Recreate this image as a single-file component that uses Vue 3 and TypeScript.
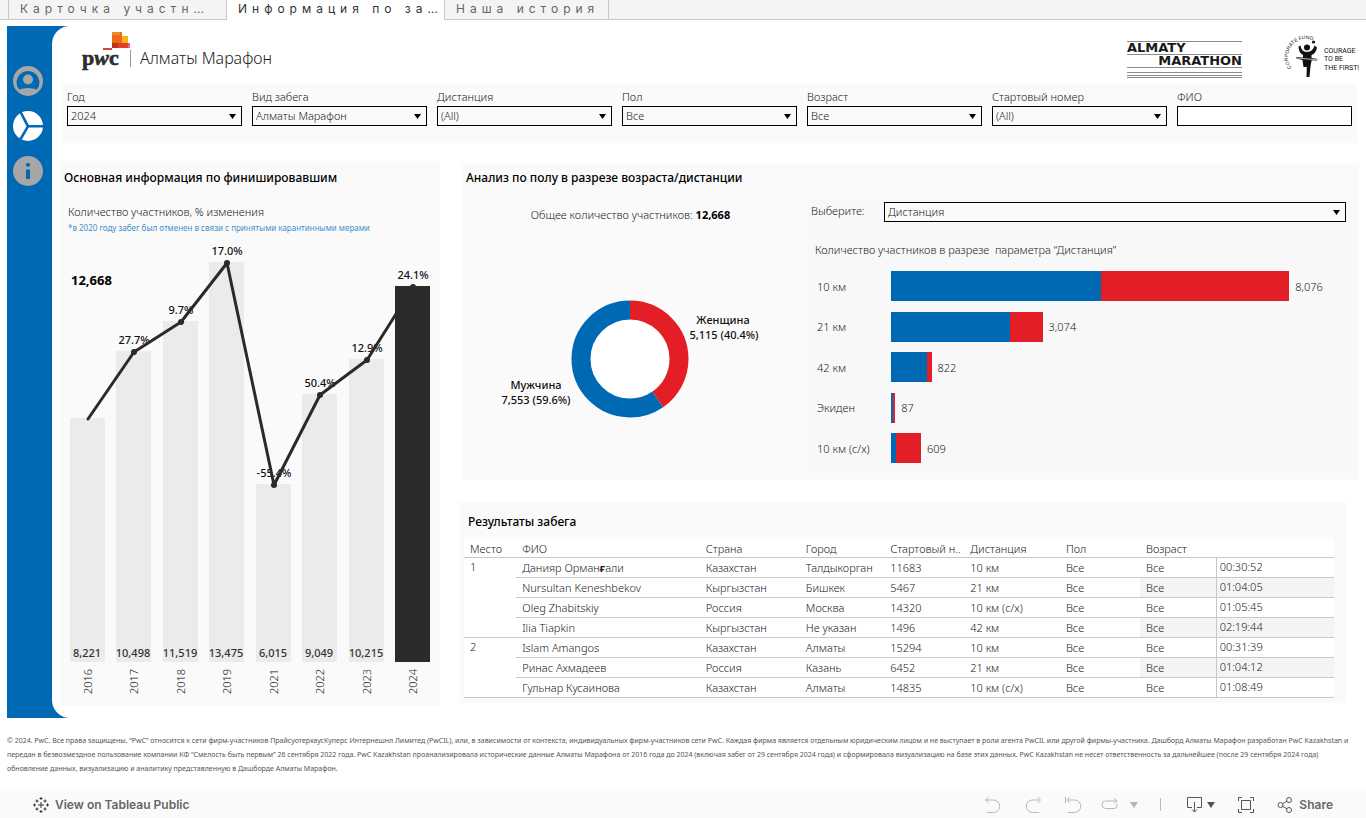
<script setup lang="ts">
import { computed, ref } from 'vue'

interface Filter {
  id: string
  label: string
  options: string[]
}

interface YearStat {
  year: string
  total: number
  change: string
}

interface DistanceStat {
  name: string
  men: number
  total: number
}

interface Runner {
  place?: string
  span?: number
  name: string[]
  country: string
  city: string
  bib: string
  distance: string
  time: string
}

const tabs = ['Карточка участн…', 'Информация по за…', 'Наша история']
const activeTab = ref(1)

const filters: Filter[] = [
  { id: 'year', label: 'Год', options: ['2024'] },
  { id: 'race', label: 'Вид забега', options: ['Алматы Марафон'] },
  { id: 'distance', label: 'Дистанция', options: ['(All)'] },
  { id: 'sex', label: 'Пол', options: ['Все'] },
  { id: 'age', label: 'Возраст', options: ['Все'] },
  { id: 'bib', label: 'Стартовый номер', options: ['(All)'] },
]

const years: YearStat[] = [
  { year: '2016', total: 8221, change: '' },
  { year: '2017', total: 10498, change: '27.7%' },
  { year: '2018', total: 11519, change: '9.7%' },
  { year: '2019', total: 13475, change: '17.0%' },
  { year: '2021', total: 6015, change: '-55.4%' },
  { year: '2022', total: 9049, change: '50.4%' },
  { year: '2023', total: 10215, change: '12.9%' },
  { year: '2024', total: 12668, change: '24.1%' },
]

const baseline = 422
const bars = computed(() =>
  years.map((y, i) => {
    const height = Math.floor((y.total / 13475) * 400)
    const x = Math.round(10 + i * 46.45)
    return { ...y, x, cx: x + 18, height, top: baseline - height, current: i === years.length - 1 }
  }),
)
const linePoints = computed(() => bars.value.map((b) => `${b.cx},${b.top + 1}`).join(' '))

const distances: DistanceStat[] = [
  { name: '10 км', men: 4262, total: 8076 },
  { name: '21 км', men: 2410, total: 3074 },
  { name: '42 км', men: 740, total: 822 },
  { name: 'Экиден', men: 50, total: 87 },
  { name: '10 км (с/х)', men: 95, total: 609 },
]
const axisMax = 9350
const share = (n: number) => `${(n / axisMax) * 100}%`
const format = (n: number) => n.toLocaleString('en-US')

const columns = ['Место', 'ФИО', 'Страна', 'Город', 'Стартовый н..', 'Дистанция', 'Пол', 'Возраст', '']
const runners: Runner[] = [
  { place: '1', span: 4, name: ['Данияр Орман', 'ғ', 'али'], country: 'Казахстан', city: 'Талдыкорган', bib: '11683', distance: '10 км', time: '00:30:52' },
  { name: ['Nursultan Keneshbekov'], country: 'Кыргызстан', city: 'Бишкек', bib: '5467', distance: '21 км', time: '01:04:05' },
  { name: ['Oleg Zhabitskiy'], country: 'Россия', city: 'Москва', bib: '14320', distance: '10 км (с/х)', time: '01:05:45' },
  { name: ['Ilia Tiapkin'], country: 'Кыргызстан', city: 'Не указан', bib: '1496', distance: '42 км', time: '02:19:44' },
  { place: '2', span: 3, name: ['Islam Amangos'], country: 'Казахстан', city: 'Алматы', bib: '15294', distance: '10 км', time: '00:31:39' },
  { name: ['Ринас Ахмадеев'], country: 'Россия', city: 'Казань', bib: '6452', distance: '21 км', time: '01:04:12' },
  { name: ['Гульнар Кусаинова'], country: 'Казахстан', city: 'Алматы', bib: '14835', distance: '10 км (с/х)', time: '01:08:49' },
]
</script>

<template>
  <div class="page">
    <nav class="tabs" aria-label="Листы">
      <button
        v-for="(tab, i) in tabs"
        :key="tab"
        type="button"
        :class="['tab', { active: i === activeTab }]"
        @click="activeTab = i"
      >
        {{ tab }}
      </button>
    </nav>

    <div class="shell">
      <nav class="rail" aria-label="Разделы">
        <button type="button" aria-label="Участник">
          <svg viewBox="0 0 30 30" width="30" height="30">
            <circle cx="15" cy="15" r="15" fill="#a6a6a6" />
            <path d="M6 23.600A11.500 11.500 0 1 1 24 23.600Q15 20.200 6 23.600Z" fill="#0069b4" />
            <circle cx="15" cy="13.500" r="5" fill="#a6a6a6" />
          </svg>
        </button>
        <button type="button" aria-label="Забеги">
          <svg viewBox="0 0 30 30" width="30" height="30">
            <circle cx="15" cy="15" r="15" fill="#fff" />
            <path d="M7.500 1L15 15.300L7 29M15 15.300H30" fill="none" stroke="#0069b4" stroke-width="2.600" />
          </svg>
        </button>
        <button type="button" aria-label="Информация">
          <svg viewBox="0 0 30 30" width="30" height="30">
            <circle cx="15" cy="15" r="15" fill="#a6a6a6" />
            <circle cx="15" cy="8.800" r="2.100" fill="#0069b4" />
            <path d="M13 13.500H17V23H13Z" fill="#0069b4" />
          </svg>
        </button>
      </nav>

      <main class="main">
        <header class="header">
          <svg class="pwc" viewBox="0 0 50 44" width="50" height="44" role="img" aria-label="pwc">
            <rect x="30" y="2" width="10" height="16" fill="#eb6a1c" />
            <rect x="30" y="2" width="8" height="3" fill="#f08a24" />
            <rect x="40" y="6" width="6" height="8" fill="#fbb216" />
            <rect x="30" y="13" width="10" height="5" fill="#c5301f" />
            <rect x="36" y="13" width="10" height="5" fill="#e0402a" />
            <rect x="46" y="13" width="2" height="5" fill="#e8628f" />
            <rect x="21" y="18" width="9" height="2" fill="#cf4a3c" />
            <text x="0" y="35" class="pwc-word">p<tspan font-style="italic">w</tspan>c</text>
          </svg>
          <h1 class="title">Алматы Марафон</h1>
          <svg class="marathon" viewBox="0 0 115 40" width="115" height="40" role="img" aria-label="Almaty Marathon">
            <g fill="#8c8c8c">
              <rect y="2" width="115" height="1" />
              <rect y="15" width="115" height="1" />
              <rect y="28" width="115" height="1" />
              <rect y="33" width="115" height="1" />
              <rect y="36" width="115" height="1" />
              <rect y="38" width="115" height="1" />
            </g>
            <text x="0" y="13" class="marathon-word">ALMATY</text>
            <text x="115" y="26" text-anchor="end" class="marathon-word">MARATHON</text>
          </svg>
          <svg class="fund" viewBox="0 0 76 46" width="76" height="46" role="img" aria-label="Courage to be the first">
            <path id="fund-arc" d="M8.600 34.800A18 18 0 1 1 41 24" fill="none" />
            <text class="fund-arc-word"><textPath href="#fund-arc">CORPORATE FUND</textPath></text>
            <circle cx="24" cy="14.500" r="3" />
            <circle cx="30.500" cy="9" r="1.600" />
            <path d="M15.500 13.500L17.500 12.500Q18 18.500 24 19Q30 18.500 31.500 12.500L34 14.500Q33 20.500 28.500 22L28.500 25L34.500 26L34 27.500L28.700 27.200L27.500 33L26.500 44H23.500L23.800 34H20.500L19.500 27L13 25.500L13.200 24L20 24.500V22Q15.500 19.500 15.500 13.500Z" />
            <path d="M13 25L34.500 26.800" stroke="#fff" stroke-width="0.700" />
            <g class="fund-word">
              <text x="41" y="20">COURAGE</text>
              <text x="41" y="28">TO BE</text>
              <text x="41" y="37">THE FIRST!</text>
            </g>
          </svg>
        </header>

        <form class="filters" @submit.prevent>
          <div v-for="f in filters" :key="f.id" class="field">
            <label :for="f.id">{{ f.label }}</label>
            <div class="select">
              <select :id="f.id">
                <option v-for="o in f.options" :key="o">{{ o }}</option>
              </select>
              <svg class="arrow" viewBox="0 0 7 5" width="7" height="5"><path d="M0 0H7L3.500 5Z" /></svg>
            </div>
          </div>
          <div class="field">
            <label for="fio">ФИО</label>
            <input id="fio" type="text" />
          </div>
        </form>

        <div class="board">
          <section class="panel finishers">
            <h2>Основная информация по финишировавшим</h2>
            <h3>Количество участников, % изменения</h3>
            <p class="hint">*в 2020 году забег был отменен в связи с принятыми карантинными мерами</p>
            <svg class="columns" viewBox="0 0 380 460" role="img" aria-label="Количество участников по годам">
              <rect
                v-for="b in bars.slice(0, -1)"
                :key="b.year"
                :x="b.x"
                :y="b.top"
                width="35"
                :height="b.height"
                fill="#ebebeb"
              />
              <text v-for="b in bars" :key="b.year" :x="b.cx" :y="b.top - 7" class="change">{{ b.change }}</text>
              <polyline :points="linePoints" fill="none" stroke="#2b2a29" stroke-width="3" stroke-linecap="round" stroke-linejoin="round" />
              <circle v-for="b in bars.slice(1)" :key="b.year" :cx="b.cx" :cy="b.top + 1" r="3" fill="#2b2a29" />
              <template v-for="b in bars" :key="b.year">
                <rect v-if="b.current" :x="b.x" :y="b.top" width="35" :height="b.height" fill="#2b2a29" />
                <text v-else :x="b.cx - 1" :y="baseline - 5" class="amount">{{ format(b.total) }}</text>
                <text :transform="`translate(${b.cx + 4} 454) rotate(-90)`" class="year">{{ b.year }}</text>
              </template>
              <text x="11" y="45" class="total">12,668</text>
            </svg>
          </section>

          <div class="side">
            <section class="panel analysis">
              <h2>Анализ по полу в разрезе возраста/дистанции</h2>
              <div class="analysis-body">
                <div class="gender">
                  <p class="sum">Общее количество участников: <b>12,668</b></p>
                  <svg class="donut" viewBox="0 0 345 160" width="345" height="160" role="img" aria-label="Распределение по полу">
                    <circle cx="168" cy="80" r="40" fill="#fff" />
                    <g fill="none" stroke-width="19" transform="rotate(-90 168 80)">
                      <circle cx="168" cy="80" r="49" stroke="#0069b4" pathLength="1000" stroke-dasharray="0 404 596 0" />
                      <circle cx="168" cy="80" r="49" stroke="#e31e26" pathLength="1000" stroke-dasharray="404 596" />
                    </g>
                    <text x="261" y="45" class="slice">Женщина</text>
                    <text x="262" y="60" class="slice">5,115 (40.4%)</text>
                    <text x="74" y="110" class="slice">Мужчина</text>
                    <text x="74" y="125" class="slice">7,553 (59.6%)</text>
                  </svg>
                </div>

                <div class="breakdown">
                  <div class="choose">
                    <label for="param">Выберите:</label>
                    <div class="select">
                      <select id="param">
                        <option>Дистанция</option>
                      </select>
                      <svg class="arrow" viewBox="0 0 7 5" width="7" height="5"><path d="M0 0H7L3.500 5Z" /></svg>
                    </div>
                  </div>
                  <h3>Количество участников в разрезе&nbsp; параметра “Дистанция”</h3>
                  <ul class="bars">
                    <li v-for="d in distances" :key="d.name">
                      <span class="bar-name">{{ d.name }}</span>
                      <div class="track">
                        <i class="men" :style="{ width: share(d.men) }"></i>
                        <i class="women" :style="{ width: share(d.total - d.men) }"></i>
                        <span>{{ format(d.total) }}</span>
                      </div>
                    </li>
                  </ul>
                </div>
              </div>
            </section>

            <section class="panel results">
              <h2>Результаты забега</h2>
              <div class="table-box">
                <table>
                  <colgroup>
                    <col class="c-place" />
                    <col class="c-name" />
                    <col class="c-country" />
                    <col class="c-city" />
                    <col class="c-bib" />
                    <col class="c-distance" />
                    <col class="c-sex" />
                    <col class="c-age" />
                    <col class="c-time" />
                  </colgroup>
                  <thead>
                    <tr>
                      <th v-for="c in columns" :key="c" scope="col">{{ c }}</th>
                    </tr>
                  </thead>
                  <tbody>
                    <tr v-for="(r, i) in runners" :key="r.bib" :class="{ even: i % 2 === 1 }">
                      <td v-if="r.place" :rowspan="r.span" class="place">{{ r.place }}</td>
                      <td>{{ r.name[0] }}<b v-if="r.name[1]" class="kazakh">{{ r.name[1] }}</b>{{ r.name[2] }}</td>
                      <td>{{ r.country }}</td>
                      <td>{{ r.city }}</td>
                      <td>{{ r.bib }}</td>
                      <td>{{ r.distance }}</td>
                      <td>Все</td>
                      <td class="age">Все</td>
                      <td class="time">{{ r.time }}</td>
                    </tr>
                  </tbody>
                </table>
              </div>
            </section>
          </div>
        </div>
      </main>
    </div>

    <p class="legal">
      © 2024. PwC. Все права защищены. “PwC” относится к сети фирм-участников ПрайсуотерхаусКуперс Интернешнл Лимитед (PwCIL), или, в зависимости от контекста, индивидуальных фирм-участников сети PwC. Каждая фирма является отдельным юридическим лицом и не выступает в роли агента PwCIL или другой фирмы-участника. Дашборд Алматы Марафон разработан PwC Kazakhstan и<br />
      передан в безвозмездное пользование компании КФ “Смелость быть первым” 26 сентября 2022 года. PwC Kazakhstan проанализировала исторические данные Алматы Марафона от 2016 года до 2024 (включая забег от 29 сентября 2024 года) и сформировала визуализацию на базе этих данных. PwC Kazakhstan не несет ответственность за дальнейшее (после 29 сентября 2024 года)<br />
      обновление данных, визуализацию и аналитику представленную в Дашборде Алматы Марафон.
    </p>

    <footer class="toolbar">
      <button type="button" class="tool brand">
        <svg viewBox="0 0 16 16" width="16" height="16" fill="none" stroke="#333" stroke-width="1">
          <path d="M8 5V11M5 8H11M8 0V3M6.500 1.500H9.500M8 13V16M6.500 14.500H9.500M1.500 6.500V9.500M0 8H3M14.500 6.500V9.500M13 8H16M4 2.500V5.500M2.500 4H5.500M12 2.500V5.500M10.500 4H13.500M4 10.500V13.500M2.500 12H5.500M12 10.500V13.500M10.500 12H13.500" />
        </svg>
        View on Tableau Public
      </button>
      <div class="tools">
        <button type="button" class="tool" aria-label="Undo">
          <svg viewBox="0 0 18 18" width="18" height="18" class="faint"><path d="M4.500 1L1.500 4L4.500 7M2 4H9.500A6.200 6.200 0 0 1 9.500 16.500H3" /></svg>
        </button>
        <button type="button" class="tool" aria-label="Redo">
          <svg viewBox="0 0 18 18" width="18" height="18" class="faint"><path d="M13.500 1L16.500 4L13.500 7M16 4H8.500A6.200 6.200 0 0 0 8.500 16.500H15" /></svg>
        </button>
        <button type="button" class="tool" aria-label="Revert">
          <svg viewBox="0 0 18 18" width="18" height="18" class="faint"><path d="M1.500 1V7M6 1L3 4L6 7M3.500 4H10.500A6.200 6.200 0 0 1 10.500 16.500H4" /></svg>
        </button>
        <button type="button" class="tool refresh" aria-label="Refresh">
          <svg viewBox="0 0 18 18" width="18" height="18" class="faint"><path d="M13 2L16 5L13 8M15.500 5H4.500Q1 5 1 8.500Q1 12.500 4.500 12.500H13Q16 12.500 16 9.500V8" /></svg>
          <svg viewBox="0 0 8 6" width="8" height="6" fill="#b4b4b4"><path d="M0 0H8L4 6Z" /></svg>
        </button>
        <span class="divider"></span>
        <button type="button" class="tool download" aria-label="Download">
          <svg viewBox="0 0 18 18" width="18" height="18" class="solid"><path d="M6 11.500H1.500V1.500H15.500V11.500H11M8.500 6V16M6 13.500L8.500 16L11 13.500" /></svg>
          <svg viewBox="0 0 8 6" width="8" height="6" fill="#555"><path d="M0 0H8L4 6Z" /></svg>
        </button>
        <button type="button" class="tool" aria-label="Full screen">
          <svg viewBox="0 0 18 18" width="18" height="18" class="solid"><path d="M5 1.500H1.500V5M13 1.500H16.500V5M5 16.500H1.500V13M13 16.500H16.500V13M4.500 4.500H13.500V13.500H4.500Z" /></svg>
        </button>
        <button type="button" class="tool share">
          <svg viewBox="0 0 16 16" width="16" height="16" class="solid"><circle cx="3.500" cy="8" r="2.500" /><circle cx="12" cy="3" r="2.500" /><circle cx="12" cy="13" r="2.500" /><path d="M5.700 6.700L9.800 4.300M5.700 9.300L9.800 11.700" /></svg>
          Share
        </button>
      </div>
    </footer>
  </div>
</template>

<style>
body {
  margin: 0;
  background: #fff;
}
</style>

<style scoped>
.page {
  display: flex;
  flex-direction: column;
  min-height: 100vh;
  font-family: 'Noto Sans', 'Open Sans', sans-serif;
  font-weight: 300;
  font-size: 11px;
  color: #222;
}
button,
select,
input {
  font: inherit;
  color: inherit;
}
h1,
h2,
h3,
p,
ul {
  margin: 0;
  padding: 0;
}
.tabs {
  display: flex;
  box-sizing: border-box;
  height: 20px;
  padding-left: 8px;
  background: #f4f4f4;
  border-bottom: 1px solid #c8c8c8;
}
.tab {
  box-sizing: border-box;
  height: 19px;
  min-width: 164px;
  padding: 0 0 2px 11px;
  border: 0;
  border-right: 1px solid #c8c8c8;
  background: transparent;
  font-family: Inter, 'Liberation Sans', sans-serif;
  font-weight: 400;
  font-size: 12px;
  line-height: 16px;
  letter-spacing: 5px;
  text-align: left;
  white-space: nowrap;
  color: #666;
}
.tab:not(:last-child) {
  width: 218px;
}
.tab:first-child {
  width: 219px;
  border-left: 1px solid #c8c8c8;
}
.tab.active {
  height: 20px;
  background: #fff;
  color: #333;
}
.shell {
  display: flex;
  margin: 6px 0 0 7px;
  background: linear-gradient(#0069b4, #0069b4) 0 0 / 63px 100% no-repeat;
}
.rail {
  display: flex;
  flex-direction: column;
  gap: 15px;
  width: 45px;
  flex: none;
  padding-top: 40px;
}
.rail button {
  width: 30px;
  height: 30px;
  margin-left: 6px;
  padding: 0;
  border: 0;
  background: none;
}
.rail svg {
  display: block;
}
.main {
  flex: 1;
  min-width: 0;
  padding-bottom: 12px;
  background: #fff;
  border-radius: 18px 0 0 18px;
}
.header {
  display: flex;
  align-items: flex-start;
  height: 58px;
  padding: 0 7px 0 30px;
}
.pwc {
  margin-top: 4px;
}
.pwc-word {
  font: 700 22px 'Liberation Serif', serif;
  fill: #2d2d2d;
  stroke: #2d2d2d;
  stroke-width: 0.6px;
}
.title {
  margin: 24px auto 0 -2px;
  padding-left: 9px;
  border-left: 1px solid #999;
  font-weight: 300;
  font-size: 16px;
  line-height: 17px;
  color: #222;
}
.marathon {
  margin: 13px 41px 0 0;
}
.marathon-word {
  font: 700 13px 'DejaVu Sans', sans-serif;
  fill: #1a1a1a;
}
.fund {
  margin-top: 7px;
  fill: #111;
}
.fund-arc-word {
  font: 400 5px 'Liberation Sans', Arial, sans-serif;
}
.fund-word {
  font: 400 7px Roboto, sans-serif;
}
.filters {
  display: grid;
  grid-template-columns: repeat(7, 1fr);
  gap: 10px;
  box-sizing: border-box;
  height: 59px;
  margin: 0 9px 0 10px;
  padding: 5px 5px 0;
  background: #fafafa;
}
.field label {
  display: block;
  height: 17px;
  line-height: 16px;
}
.select {
  position: relative;
}
.select select,
.field input {
  display: block;
  box-sizing: border-box;
  width: 100%;
  height: 20px;
  padding: 0 20px 1px 3px;
  border: 1px solid #000;
  border-radius: 0;
  background: #fafafa;
  appearance: none;
}
.field input {
  background: #fff;
}
.arrow {
  position: absolute;
  right: 6px;
  top: 8px;
  pointer-events: none;
}
.board {
  display: grid;
  grid-template-columns: 380fr 899fr;
  gap: 20px;
  margin: 18px 7px 0 8px;
}
.panel {
  background: #fafafa;
}
h2 {
  font-weight: 500;
  font-size: 12px;
  line-height: 16px;
  color: #000;
}
h3 {
  font-weight: 300;
  font-size: 11px;
  line-height: 16px;
  color: #222;
}
.finishers h2 {
  padding: 9px 4px 0;
}
.finishers h3 {
  padding: 18px 8px 0;
}
.hint {
  padding: 2px 8px 0;
  font-size: 8px;
  font-weight: 400;
  line-height: 12px;
  color: #3f8fc9;
}
.columns {
  display: block;
  width: 100%;
  margin-top: 6px;
}
.change,
.amount,
.slice {
  font-size: 11px;
  font-weight: 500;
  text-anchor: middle;
  fill: #111;
}
.amount {
  fill: #333;
}
.year {
  font-size: 11px;
  fill: #222;
}
.total {
  font-size: 13px;
  font-weight: 700;
  fill: #000;
}
.side {
  display: flex;
  flex-direction: column;
  gap: 22px;
  padding: 3px 0;
}
.analysis {
  margin-left: 2px;
  padding-bottom: 8px;
}
.analysis h2 {
  padding: 6px 4px 0;
}
.analysis-body {
  display: grid;
  grid-template-columns: 345fr 545fr;
  margin: 12px 7px 0 0;
}
.gender {
  text-align: center;
}
.sum {
  padding: 9px 8px 0 0;
  line-height: 16px;
}
.sum b {
  font-weight: 700;
  color: #000;
}
.donut {
  display: block;
  margin: 56px auto 0;
  max-width: 100%;
}
.breakdown {
  padding-bottom: 9px;
  background: #f8f8f8;
}
.choose {
  display: grid;
  grid-template-columns: 73px 1fr;
  padding: 4px 6px 0 4px;
}
.choose label {
  line-height: 18px;
}
.breakdown h3 {
  padding: 20px 8px 0;
}
.bars {
  display: flex;
  flex-direction: column;
  justify-content: space-between;
  height: 192px;
  margin-top: 13px;
  list-style: none;
}
.bars li {
  display: flex;
  align-items: center;
  height: 30px;
}
.bar-name {
  width: 74px;
  padding-left: 10px;
  flex: none;
}
.track {
  display: flex;
  flex: 1;
  align-items: center;
}
.track i {
  height: 30px;
  flex: none;
}
.track span {
  margin-left: 6px;
}
.men {
  background: #0069b4;
}
.women {
  background: #e31e26;
}
.results {
  margin-right: 12px;
  padding-bottom: 4px;
}
.results h2 {
  padding: 12px 8px 9px;
}
.table-box {
  margin: 0 13px 0 4px;
  padding-bottom: 1px;
  background: #fff;
}
table {
  width: 100%;
  table-layout: fixed;
  border-collapse: separate;
  border-spacing: 0;
}
.c-place { width: 6%; }
.c-name { width: 21.100%; }
.c-country { width: 11.500%; }
.c-city { width: 9.700%; }
.c-bib { width: 9.200%; }
.c-distance { width: 11%; }
.c-sex { width: 9.200%; }
.c-age { width: 8.700%; }
.c-time { width: 13.600%; }
th,
td {
  box-sizing: border-box;
  height: 20px;
  padding: 1px 0 0 6px;
  border-bottom: 1px solid #c8c8c8;
  font-weight: 300;
  line-height: 16px;
  text-align: left;
  white-space: nowrap;
}
th {
  height: 19px;
}
.place {
  vertical-align: top;
}
.time {
  padding: 0 0 1px 3px;
  border-left: 1px solid #c8c8c8;
}
.even .age,
.even .time {
  background: #f4f4f4;
}
.kazakh {
  font-weight: 700;
  color: #222;
}
.legal {
  padding: 16px 7px 15px;
  font-size: 7px;
  font-weight: 400;
  line-height: 14px;
  white-space: nowrap;
  color: #555;
}
.toolbar {
  display: flex;
  align-items: center;
  justify-content: space-between;
  height: 27px;
  margin-top: auto;
  padding: 0 33px;
  background: #fafafa;
}
.tool {
  display: flex;
  align-items: center;
  gap: 6px;
  padding: 0;
  border: 0;
  background: none;
  font: 600 12px Inter, 'Liberation Sans', sans-serif;
  color: #666;
}
.tools {
  display: flex;
  align-items: center;
  gap: 22px;
}
.refresh {
  gap: 11px;
  margin-left: -3px;
}
.divider {
  width: 1px;
  height: 13px;
  background: #bbb;
}
.download {
  gap: 3px;
  margin-left: 3px;
}
.faint,
.solid {
  fill: none;
  stroke: #b8b8b8;
  stroke-width: 1;
}
.solid {
  stroke: #555;
}
</style>
